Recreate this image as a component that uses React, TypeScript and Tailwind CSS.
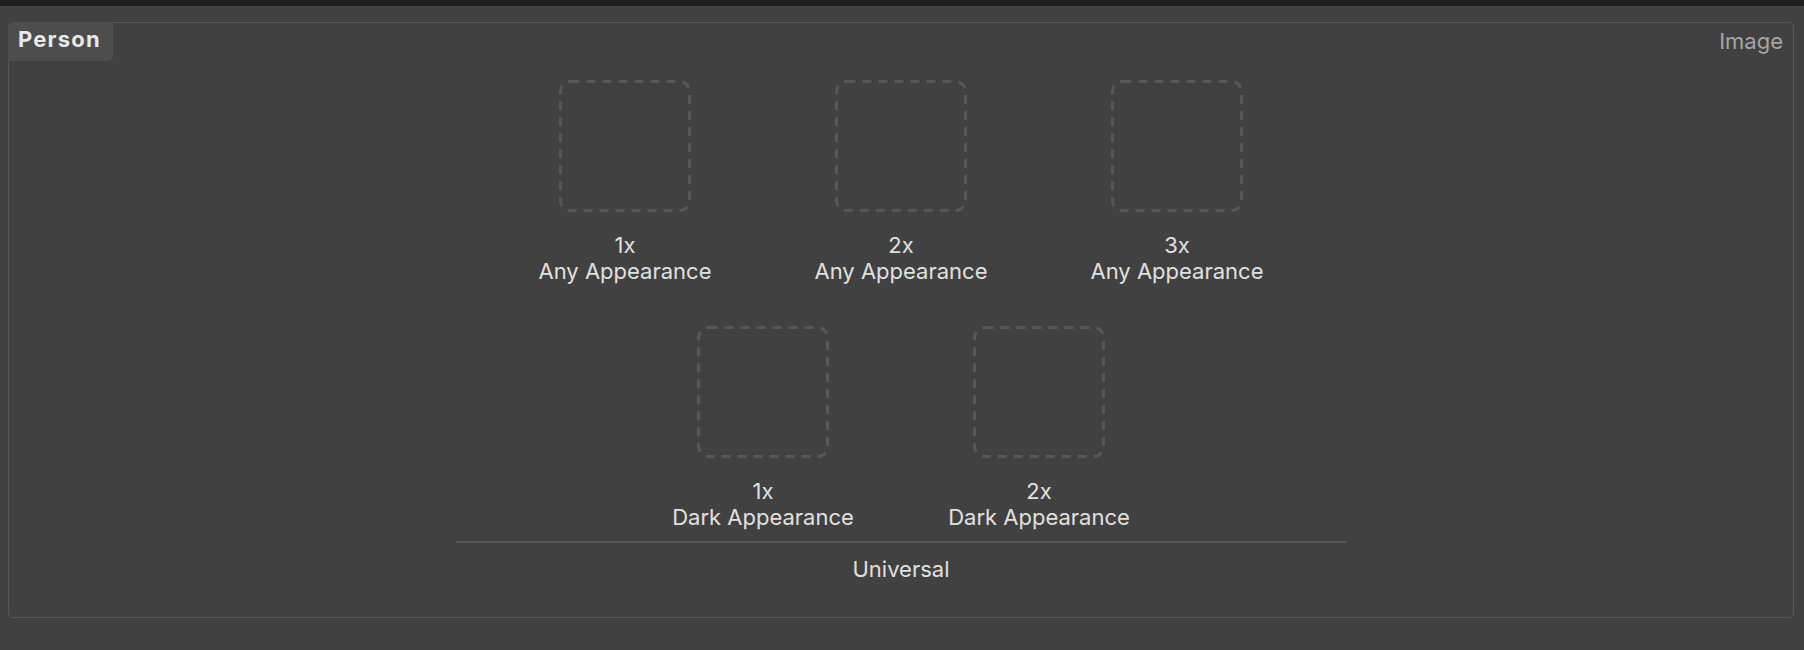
import React from "react";

const font = { fontFamily: "Inter, 'Noto Sans', 'Liberation Sans', sans-serif" };

function Slot({ scale, appearance }: { scale: string; appearance: string }) {
  return (
    <div className="flex w-[276px] flex-col items-center">
      <svg width="132" height="132" viewBox="0 0 132 132" className="block">
        <rect
          x="1.5"
          y="1.5"
          width="129"
          height="129"
          rx="10"
          fill="none"
          stroke="#575757"
          strokeWidth="3"
          strokeDasharray="9 7"
        />
      </svg>
      <div className="mt-[20px] text-center text-[22px] leading-[26px] text-[#e0e0e0]">
        <div>{scale}</div>
        <div>{appearance}</div>
      </div>
    </div>
  );
}

export default function App() {
  return (
    <div className="flex h-[650px] w-full flex-col bg-[#414141]" style={font}>
      <div className="h-[6px] bg-[#221f20]" />
      <div className="relative ml-[8px] mr-[10px] mt-[16px] h-[596px] rounded-[5px] border border-[#575757]">
        {/* asset name tab */}
        <div className="absolute left-[-1px] top-[-1px] flex h-[39px] w-[105px] items-center rounded-tl-[5px] rounded-br-[5px] bg-[#4d4d4d] pb-[5px] pl-[10px]">
          <span className="text-[22px] font-bold tracking-[1.2px] text-[#e8e8e8]">Person</span>
        </div>
        <div className="absolute right-[10px] top-[2px] text-[22px] text-[#a6a6a6]">Image</div>

        <div className="flex flex-col items-center pt-[57px]">
          <div className="flex">
            <Slot scale="1x" appearance="Any Appearance" />
            <Slot scale="2x" appearance="Any Appearance" />
            <Slot scale="3x" appearance="Any Appearance" />
          </div>
          <div className="mt-[42px] flex">
            <Slot scale="1x" appearance="Dark Appearance" />
            <Slot scale="2x" appearance="Dark Appearance" />
          </div>
          <div className="mt-[11px] h-[2px] w-[891px] bg-[#575757]" />
          <div className="mt-[13px] text-[22px] leading-[26px] text-[#e0e0e0]">Universal</div>
        </div>
      </div>
    </div>
  );
}
